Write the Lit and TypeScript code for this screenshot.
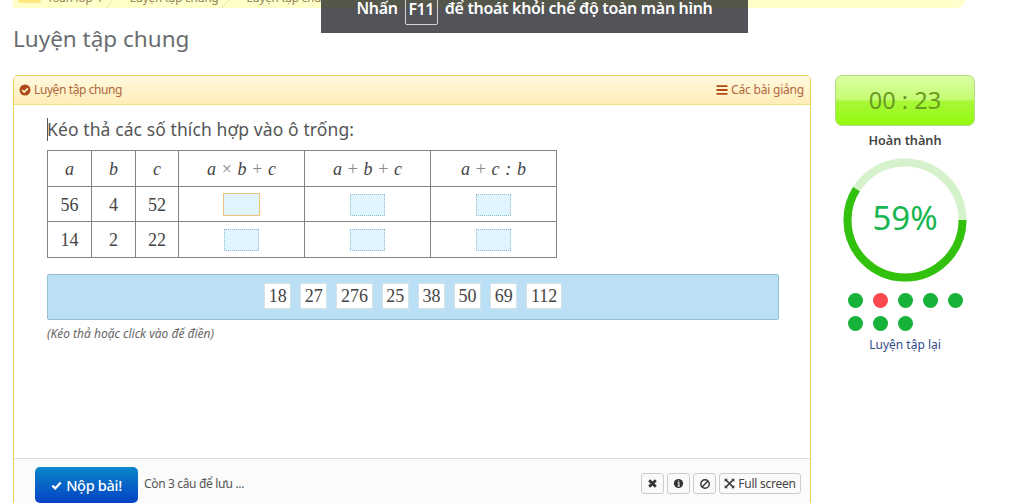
import { LitElement, html, css, svg } from 'lit'
import { customElement, state } from 'lit/decorators.js'
import { classMap } from 'lit/directives/class-map.js'

@customElement('progress-ring')
export class ProgressRing extends LitElement {
  static properties = {
    value: { type: Number },
  }

  declare value: number

  static styles = css`
    :host {
      display: grid;
      width: 124px;
      height: 124px;
      place-items: center;
    }
    svg,
    span {
      grid-area: 1 / 1;
    }
    circle {
      fill: none;
      stroke-width: 8;
    }
    .track {
      stroke: #d5f2cd;
    }
    .bar {
      stroke: #32c10c;
    }
    span {
      color: #18b650;
      font: 33px/36px 'Noto Sans', sans-serif;
      padding-bottom: 4px;
    }
  `

  render() {
    return html`
      <svg width="124" height="124" viewBox="0 0 124 124">
        <circle class="track" cx="62" cy="62" r="57.5"></circle>
        <circle class="bar" cx="62" cy="62" r="57.5" pathLength="100" stroke-dasharray="${this.value} 100"></circle>
      </svg>
      <span>${this.value}%</span>
    `
  }
}

const icons = {
  checkCircle: svg`<circle cx="6" cy="6" r="5.5" fill="currentColor"/><path d="M3.2 6.1 5.2 8.1 8.9 4.3" fill="none" stroke="#fff3cd" stroke-width="1.7"/>`,
  bars: svg`<path d="M.5 2.2h11M.5 6h11M.5 9.8h11" stroke="currentColor" stroke-width="1.8"/>`,
  check: svg`<path d="M1.5 6.2 4.6 9.2 10.6 2.8" fill="none" stroke="currentColor" stroke-width="2.5"/>`,
  times: svg`<path d="M2.4 2.4 9.6 9.6M9.6 2.4 2.4 9.6" stroke="currentColor" stroke-width="3"/>`,
  info: svg`<circle cx="6" cy="6" r="5" fill="currentColor"/><path d="M5 5.2h1.5V8.6M4.8 8.6h2.6M5.4 3.2h1.3" fill="none" stroke="#fff" stroke-width="1.1"/>`,
  ban: svg`<circle cx="6" cy="6" r="4.2" fill="none" stroke="currentColor" stroke-width="1.4"/><path d="M3 9 9 3" stroke="currentColor" stroke-width="1.4"/>`,
  expand: svg`<path d="M2 2l8 8M10 2 2 10" stroke="currentColor" stroke-width="1.8"/><path d="M.7.9h3.6L.7 4.3zM11.3.9v3.4L7.7.9zM.7 11.1V7.7l3.6 3.4zM11.3 11.1H7.7l3.6-3.4z" fill="currentColor"/>`,
}

const icon = (name: keyof typeof icons, size = 12) => html`
  <svg class="icon" width=${size} height=${size} viewBox="0 0 12 12">${icons[name]}</svg>
`

@customElement('app-root')
export class AppRoot extends LitElement {
  @state() crumbs = ['Toán lớp 4', 'Luyện tập chung', 'Luyện tập chung']
  @state() rows = [[56, 4, 52], [14, 2, 22]]
  @state() choices = [18, 27, 276, 25, 38, 50, 69, 112]
  @state() answers = [true, false, true, true, true, true, true, true]
  @state() active = '0-0'

  static styles = css`
    * {
      box-sizing: border-box;
    }
    :host {
      display: block;
      position: relative;
      height: 503px;
      overflow: hidden;
      background: #fff;
      color: #555;
      font: 12px/16px 'Noto Sans', sans-serif;
      white-space: nowrap;
    }
    .icon {
      display: block;
      flex: none;
    }

    .breadcrumb {
      display: flex;
      width: 952px;
      height: 24px;
      margin: -16px 0 0 13px;
      background: #ffffc9;
      border-bottom-right-radius: 9px;
    }
    .home {
      width: 23px;
      height: 19px;
      margin-left: 5px;
      background: #ffe680;
      border-radius: 3px;
    }
    .crumb {
      display: flex;
      padding: 6px 0 0 6px;
      font-size: 11.5px;
      letter-spacing: -0.1px;
      color: #8b7b55;
    }
    .crumb + .crumb {
      padding-left: 13px;
    }
    .crumb svg {
      margin: 2px 0 0 3px;
    }

    .toast {
      position: absolute;
      top: 0;
      left: 321px;
      width: 427px;
      height: 33px;
      display: flex;
      justify-content: center;
      background: linear-gradient(#55574a 0, #55574a 7px, #525459 9px);
      color: #fff;
      font: 600 16px/22px 'Noto Sans', sans-serif;
      letter-spacing: -0.32px;
    }
    .toast span {
      margin-top: -3px;
    }
    .toast .key {
      width: 33px;
      height: 30px;
      margin: -5px 7px 0;
      padding-top: 2px;
      border: 1px solid #d5d5d5;
      border-radius: 2px;
      text-align: center;
      letter-spacing: -0.5px;
    }

    h1 {
      margin: 14px 0 0 13px;
      height: 53px;
      font: 22.5px/33px 'Noto Sans', sans-serif;
      color: #6a6d70;
    }

    .columns {
      display: flex;
      gap: 24px;
      padding-left: 13px;
    }
    .panel {
      display: flex;
      flex-direction: column;
      width: 798px;
      height: 440px;
      border: 1px solid #e6d062;
      border-radius: 5px 5px 0 0;
    }
    .panel-head {
      display: flex;
      align-items: center;
      gap: 3px;
      height: 29px;
      padding: 0 6px 0 5px;
      background: linear-gradient(#fff9df, #ffedb9);
      border-bottom: 1px solid #f2dc88;
      border-radius: 4px 4px 0 0;
      color: #b0673c;
      letter-spacing: -0.4px;
    }
    .panel-head .icon {
      color: #ab4a16;
    }
    .panel-head .link {
      display: flex;
      align-items: center;
      gap: 3px;
      margin-left: auto;
      letter-spacing: -0.2px;
    }
    .question {
      flex: none;
      height: 353px;
      padding: 13px 31px 0 33px;
    }
    .prompt {
      height: 32px;
      font-size: 17.5px;
      line-height: 23px;
      letter-spacing: 0.1px;
      color: #555;
    }
    .prompt span {
      display: inline-block;
      border-left: 1px solid #555;
      text-indent: -1px;
    }

    table {
      border-collapse: collapse;
      table-layout: fixed;
      width: 510px;
      color: #444;
      font: 18px/20px 'Liberation Serif', serif;
      text-align: center;
    }
    th,
    td {
      height: 35.7px;
      padding: 1px 0 0;
      border: 1px solid #828282;
      font-weight: normal;
    }
    .narrow {
      width: 44px;
    }
    .narrow.last {
      width: 43px;
    }
    th {
      padding-top: 2px;
      font-style: italic;
      word-spacing: 1.2px;
    }
    th b {
      font-weight: normal;
      font-style: normal;
      color: #888;
    }
    .slot {
      width: 35px;
      height: 22px;
      margin: 0 auto;
      border: 1px dotted #8cbdcb;
      background: #dff4fe;
    }
    .slot.active {
      width: 37px;
      height: 23px;
      border: 1px solid #efc27c;
    }

    .bank {
      display: flex;
      justify-content: center;
      gap: 9px;
      height: 46px;
      margin-top: 16px;
      padding-top: 8px;
      background: #bbe0f5;
      border: 1px solid #97c0d2;
      border-radius: 2px;
    }
    .choice {
      height: 26px;
      padding: 0 3.6px;
      background: #fff;
      border: 1px solid #d5e2e8;
      color: #444;
      font: 18px/25px 'Liberation Serif', serif;
    }
    .hint {
      margin-top: 6px;
      font-style: italic;
      font-size: 12px;
      color: #666;
    }

    .footer {
      display: flex;
      flex: 1;
      align-items: flex-start;
      padding: 8px 9px 0 21px;
      border-top: 1px solid #ddd;
      background: #fbfbfb;
    }
    .submit {
      display: flex;
      align-items: center;
      justify-content: center;
      gap: 4px;
      width: 103px;
      height: 36px;
      border-radius: 5px;
      background: linear-gradient(#0787ca, #0542c4);
      color: #fff;
      font-size: 14.5px;
      font-weight: 500;
      letter-spacing: -0.3px;
    }
    .remaining {
      margin: 9px auto 0 6px;
      letter-spacing: -0.35px;
    }
    .tools {
      display: flex;
      gap: 3px;
      margin-top: 6px;
    }
    .tool {
      display: flex;
      align-items: center;
      justify-content: center;
      gap: 3px;
      width: 23px;
      height: 21px;
      border: 1px solid #ccc;
      border-radius: 3px;
      background: #fafafa;
      color: #333;
      letter-spacing: -0.25px;
    }
    .tool.wide {
      width: 82px;
      color: #444;
    }

    .side {
      display: flex;
      flex-direction: column;
      align-items: center;
      width: 140px;
    }
    .timer {
      width: 140px;
      height: 51px;
      border: 1px solid #b5d884;
      border-radius: 7px;
      background: linear-gradient(#dcffa4, #c5fb72 48%, #a8f738 52%, #93fc0d);
      color: #699b20;
      font-size: 23.5px;
      line-height: 49px;
      text-align: center;
    }
    .done {
      margin: 6px 0 10px;
      color: #444;
      font-weight: 600;
      font-size: 12.7px;
    }
    .dots {
      display: grid;
      grid-template-columns: repeat(5, 15px);
      gap: 8px 10px;
      margin: 11px 0 6px;
    }
    .dot {
      width: 15px;
      height: 15px;
      border-radius: 50%;
      background: #17b23a;
    }
    .dot.wrong {
      background: #fc494f;
    }
    .retry {
      color: #334a8a;
    }
  `

  isActive(row: number, col: number) {
    return this.active === `${row}-${col}`
  }

  renderTable() {
    return html`
      <table>
        <tr>
          <th class="narrow">a</th>
          <th class="narrow">b</th>
          <th class="narrow last">c</th>
          <th>a <b>×</b> b <b>+</b> c</th>
          <th>a <b>+</b> b <b>+</b> c</th>
          <th>a <b>+</b> c : b</th>
        </tr>
        ${this.rows.map((row, r) => html`
          <tr>
            ${row.map((n) => html`<td>${n}</td>`)}
            ${[0, 1, 2].map((c) => html`
              <td><div class=${classMap({ slot: true, active: this.isActive(r, c) })}></div></td>
            `)}
          </tr>
        `)}
      </table>
    `
  }

  render() {
    return html`
      <nav class="breadcrumb">
        <div class="home"></div>
        ${this.crumbs.map((crumb) => html`
          <div class="crumb">
            ${crumb}
            <svg width="12" height="16"><path d="M1 16 11 4" stroke="#e6dfa6" fill="none" /></svg>
          </div>
        `)}
      </nav>
      <div class="toast">
        <span class="label">Nhấn</span>
        <span class="key">F11</span>
        <span class="rest">để thoát khỏi chế độ toàn màn hình</span>
      </div>
      <h1>Luyện tập chung</h1>
      <div class="columns">
        <div class="panel">
          <div class="panel-head">
            ${icon('checkCircle')} <span>Luyện tập chung</span>
            <div class="link">${icon('bars')} <span>Các bài giảng</span></div>
          </div>
          <div class="question">
            <div class="prompt"><span>Kéo thả các số thích hợp vào ô trống:</span></div>
            ${this.renderTable()}
            <div class="bank">
              ${this.choices.map((n) => html`<div class="choice">${n}</div>`)}
            </div>
            <div class="hint">(Kéo thả hoặc click vào để điền)</div>
          </div>
          <div class="footer">
            <div class="submit">${icon('check', 11)} <span>Nộp bài!</span></div>
            <div class="remaining">Còn 3 câu để lưu ...</div>
            <div class="tools">
              <div class="tool">${icon('times', 11)}</div>
              <div class="tool">${icon('info', 11)}</div>
              <div class="tool">${icon('ban')}</div>
              <div class="tool wide">${icon('expand', 11)} <span>Full screen</span></div>
            </div>
          </div>
        </div>
        <div class="side">
          <div class="timer">00 : 23</div>
          <div class="done">Hoàn thành</div>
          <progress-ring value="59"></progress-ring>
          <div class="dots">
            ${this.answers.map((ok) => html`<div class=${classMap({ dot: true, wrong: !ok })}></div>`)}
          </div>
          <div class="retry">Luyện tập lại</div>
        </div>
      </div>
    `
  }
}
